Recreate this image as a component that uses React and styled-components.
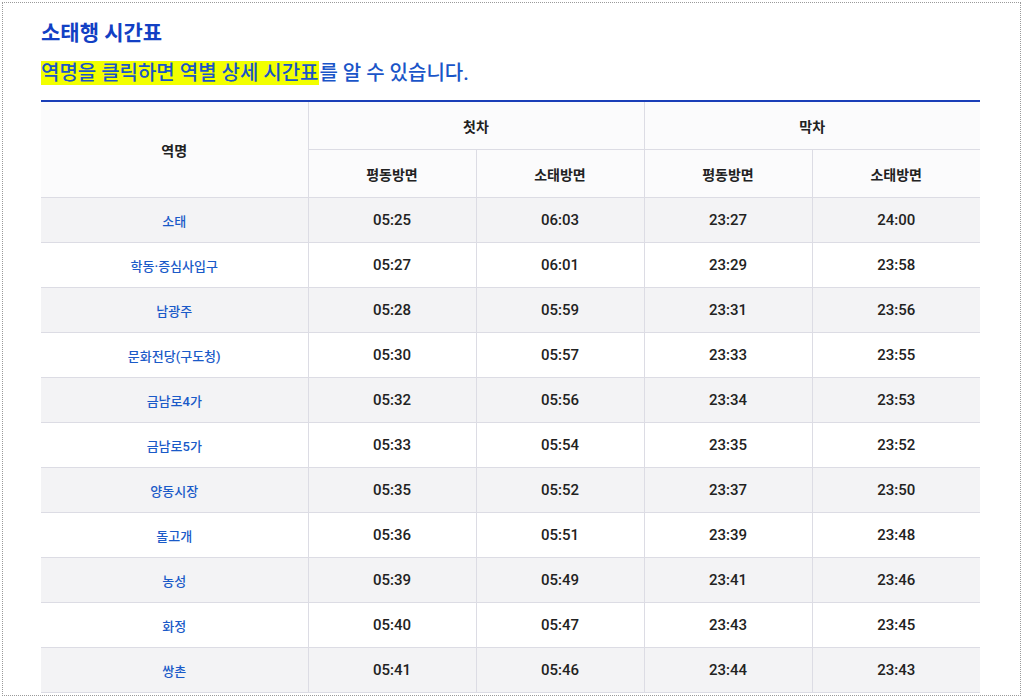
import React from "react";
import styled, { createGlobalStyle } from "styled-components";

const GlobalStyle = createGlobalStyle`
  html, body { margin: 0; padding: 0; background: #fff; }
  body { font-family: Roboto, "Noto Sans CJK KR", sans-serif; }
`;

const Frame = styled.div`
  box-sizing: border-box;
  margin: 2px 3px 0 2px;
  height: 694px;
  border: 1px dotted #9a9a9a;
  padding: 17px 0 0 38px;
  overflow: hidden;
`;

const Title = styled.h2`
  margin: 0;
  font-size: 21px;
  font-weight: 700;
  color: #1240c4;
  line-height: 26px;
`;

const Notice = styled.p`
  margin: 14px 0 13px;
  font-size: 20px;
  font-weight: 500;
  line-height: 27px;
  color: #1a55c8;
`;

const Mark = styled.span`
  background: #f2ff00;
  padding-right: 1px;
`;

const Table = styled.table`
  width: 939px;
  border-collapse: collapse;
  border-top: 2px solid #1a3fb8;
  table-layout: fixed;
  font-size: 14px;
`;

const Th = styled.th`
  height: 47px;
  padding: 0;
  background: #fbfbfc;
  color: #222;
  font-weight: 600;
  border: 1px solid #dcdce4;
  border-top: none;
  &:first-child { border-left: none; }
  &:last-child { border-right: none; }
`;

const Row = styled.tr`
  background: ${({ $odd }) => ($odd ? "#f3f3f5" : "#fff")};
`;

const Td = styled.td`
  height: 44px;
  padding: 0;
  text-align: center;
  font-weight: 500;
  color: ${({ $name }) => ($name ? "#1a5ac8" : "#222")};
  font-size: ${({ $name }) => ($name ? "13px" : "15px")};
  border: 1px solid #dcdce4;
  &:first-child { border-left: none; }
  &:last-child { border-right: none; }
`;

const rows = [
  ["소태", "05:25", "06:03", "23:27", "24:00"],
  ["학동·증심사입구", "05:27", "06:01", "23:29", "23:58"],
  ["남광주", "05:28", "05:59", "23:31", "23:56"],
  ["문화전당(구도청)", "05:30", "05:57", "23:33", "23:55"],
  ["금남로4가", "05:32", "05:56", "23:34", "23:53"],
  ["금남로5가", "05:33", "05:54", "23:35", "23:52"],
  ["양동시장", "05:35", "05:52", "23:37", "23:50"],
  ["돌고개", "05:36", "05:51", "23:39", "23:48"],
  ["농성", "05:39", "05:49", "23:41", "23:46"],
  ["화정", "05:40", "05:47", "23:43", "23:45"],
  ["쌍촌", "05:41", "05:46", "23:44", "23:43"],
];

export default function App() {
  return (
    <>
      <GlobalStyle />
      <Frame>
        <Title>소태행 시간표</Title>
        <Notice>
          <Mark>역명을 클릭하면 역별 상세 시간표</Mark>를 알 수 있습니다.
        </Notice>
        <Table>
          <colgroup>
            <col style={{ width: 267 }} />
            <col />
            <col />
            <col />
            <col />
          </colgroup>
          <thead>
            <tr>
              <Th rowSpan={2}>역명</Th>
              <Th colSpan={2}>첫차</Th>
              <Th colSpan={2}>막차</Th>
            </tr>
            <tr>
              <Th>평동방면</Th>
              <Th>소태방면</Th>
              <Th>평동방면</Th>
              <Th>소태방면</Th>
            </tr>
          </thead>
          <tbody>
            {rows.map((r, i) => (
              <Row key={r[0]} $odd={i % 2 === 0}>
                {r.map((c, j) => (
                  <Td key={j} $name={j === 0}>
                    {c}
                  </Td>
                ))}
              </Row>
            ))}
          </tbody>
        </Table>
      </Frame>
    </>
  );
}
